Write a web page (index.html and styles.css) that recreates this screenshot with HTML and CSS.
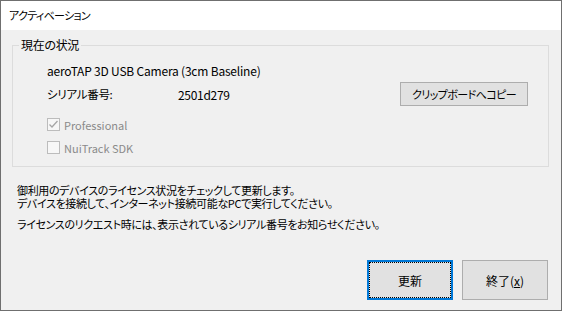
FILE: index.html
```html
<!DOCTYPE html>
<html lang="ja">
<head>
<meta charset="utf-8">
<link rel="stylesheet" href="styles.css">
</head>
<body>
<div class="window">
  <div class="titlebar">アクティベーション</div>
  <div class="content">
    <div class="group">
      <div class="legend">現在の状況</div>
      <div class="name">aeroTAP 3D USB Camera (3cm Baseline)</div>
      <div class="serial-row">
        <span class="serial-label">シリアル番号:</span>
        <span class="serial-value">2501d279</span>
        <button class="btn copy-btn">クリップボードへコピー</button>
      </div>
      <label class="check check-first">
        <span class="box checked">
          <svg width="11" height="11" viewBox="0 0 11 11"><path d="M1.5 5.5 L4 8 L9.5 2" fill="none" stroke="#a6a6a6" stroke-width="1.3"/></svg>
        </span>
        <span class="check-label">Professional</span>
      </label>
      <label class="check check-second">
        <span class="box"></span>
        <span class="check-label">NuiTrack SDK</span>
      </label>
    </div>
    <div class="desc">
      <p class="desc-lines">御利用のデバイスのライセンス状況をチェックして更新します。<br>デバイスを接続して、インターネット接続可能なPCで実行してください。</p>
      <p class="desc-note">ライセンスのリクエスト時には、表示されているシリアル番号をお知らせください。</p>
    </div>
    <div class="actions">
      <button class="btn big default"><span class="focus">更新</span></button>
      <button class="btn big">終了(<u>x</u>)</button>
    </div>
  </div>
</div>
</body>
</html>
```

FILE: styles.css
```css
* { box-sizing: border-box; }
html, body { margin: 0; padding: 0; background: #f0f0f0; }
body {
  font-family: "Noto Sans CJK JP", "Noto Sans", sans-serif;
  font-size: 12px;
  font-feature-settings: "palt";
  color: #000;
}
.window {
  width: 562px;
  height: 311px;
  border: 1px solid #6f6f6f;
  display: flex;
  flex-direction: column;
  background: #f0f0f0;
}
.titlebar {
  height: 29px;
  background: #fff;
  padding-left: 8px;
  line-height: 29px;
  font-size: 11px;
  letter-spacing: -0.7px;
}
.content {
  flex: 1;
  display: flex;
  flex-direction: column;
}
.group {
  position: relative;
  margin: 15px 12px 0 11px;
  height: 122px;
  border: 1px solid #dcdcdc;
  padding: 17px 20px 0 34px;
}
.legend {
  position: absolute;
  top: -9px;
  left: 6px;
  padding: 0 2px;
  background: #f0f0f0;
  line-height: 16px;
  letter-spacing: -0.3px;
}
.name {
  height: 16px;
  line-height: 16px;
  letter-spacing: -0.2px;
}
.serial-row {
  margin-top: 3px;
  height: 24px;
  display: flex;
  align-items: center;
}
.serial-label { width: 131px; font-size: 11.5px; letter-spacing: -0.3px; }
.serial-value { flex: 1; letter-spacing: -0.3px; }
.btn {
  font: inherit;
  font-feature-settings: "palt";
  color: #000;
  background: #e1e1e1;
  border: 1px solid #adadad;
  padding: 0;
  margin: 0;
}
.copy-btn {
  width: 128px;
  height: 24px;
  font-size: 11px;
  letter-spacing: -0.6px;
}
.check {
  display: flex;
  align-items: center;
  height: 13px;
  color: #8a8a8a;
  font-size: 11px;
}
.check-first { margin-top: 12px; }
.check-second { margin-top: 10px; }
.box {
  width: 13px;
  height: 13px;
  border: 1px solid #bcbcbc;
  background: #f7f7f7;
  display: flex;
  align-items: center;
  justify-content: center;
  margin-right: 4px;
}
.check-label { line-height: 16px; }
.desc {
  margin: 17px 0 0 16px;
  font-size: 11px;
  letter-spacing: -0.35px;
}
.desc p { margin: 0; }
.desc-lines { line-height: 13px; }
.desc-note { margin-top: 8px !important; line-height: 13px; }
.actions {
  margin-top: auto;
  display: flex;
  justify-content: flex-end;
  gap: 9px;
  padding: 0 13px 10px 0;
}
.big {
  width: 86px;
  height: 40px;
}
.default {
  border: 2px solid #0078d7;
  padding: 0;
  position: relative;
}
.focus {
  position: absolute;
  inset: 0;
  border: 1px dotted #000;
  display: flex;
  align-items: center;
  justify-content: center;
}
```
